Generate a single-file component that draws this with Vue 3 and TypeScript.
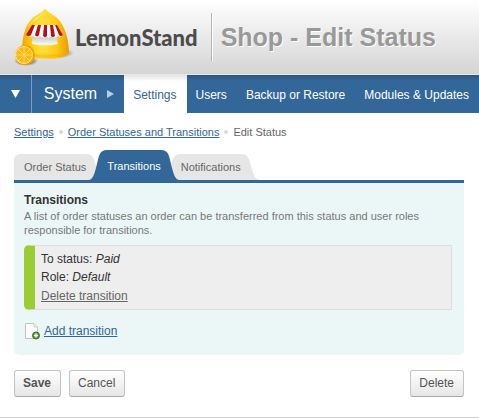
<script setup lang="ts">
import { ref } from 'vue'

interface Transition {
  id: number
  status: string
  role: string
}

const menu = ['Settings', 'Users', 'Backup or Restore', 'Modules & Updates']
const tabs = ['Order Status', 'Transitions', 'Notifications']
const activeMenu = ref('Settings')
const activeTab = ref('Transitions')
const transitions = ref<Transition[]>([{ id: 1, status: 'Paid', role: 'Default' }])

function removeTransition(id: number) {
  transitions.value = transitions.value.filter((t) => t.id !== id)
}

function addTransition() {
  transitions.value.push({ id: Date.now(), status: 'Paid', role: 'Default' })
}
</script>

<template>
  <div class="page">
    <header class="header">
      <a class="brand" href="#">
        <svg class="logo" width="64" height="60" viewBox="0 0 64 60" aria-hidden="true">
          <defs>
            <linearGradient id="dome" x1="0" x2="1" y1="0" y2="0">
              <stop offset="0" stop-color="#f3a800" />
              <stop offset=".25" stop-color="#ffd21c" />
              <stop offset=".45" stop-color="#ffdf3c" />
              <stop offset=".75" stop-color="#ffca12" />
              <stop offset="1" stop-color="#e89a00" />
            </linearGradient>
            <linearGradient id="counter" x1="0" x2="0" y1="0" y2="1">
              <stop offset="0" stop-color="#c2c2c2" />
              <stop offset="1" stop-color="#f4f4f4" />
            </linearGradient>
            <radialGradient id="shade">
              <stop offset=".6" stop-color="#6b5a20" stop-opacity=".6" />
              <stop offset="1" stop-color="#6b5a20" stop-opacity="0" />
            </radialGradient>
          </defs>
          <ellipse cx="39" cy="46" rx="24" ry="6" fill="url(#shade)" />
          <ellipse cx="15" cy="54" rx="12" ry="5" fill="url(#shade)" />
          <path d="M34 2C36 3 38 6 42 8C52 14 57 27 58 44C58 49 48 52 35 52C22 52 11 49 11 44C11 28 15 14 26 8C30 6 32 3 34 2Z" fill="url(#dome)" />
          <path d="M12 44C18 49 50 49 57 44C57 49 47 51 35 51C23 51 13 48 12 44Z" fill="#f3a900" opacity=".45" />
          <path d="M33 4C31 7 28 9 25 11C20 15 18 17 17 20C23 13 29 12 33 4Z" fill="#fff2a0" opacity=".7" />
          <path d="M22 28H46V36Q34 39 21 36Z" fill="url(#counter)" />
          <path d="M21 35Q34 38 47 35V37Q34 40 21 37Z" fill="#fff8dc" />
          <path d="M21 18H46L52 28Q50 31 47 29Q44 32 41 29Q38 32 35 29Q32 32 29 29Q26 32 23 29Q20 31 16 28Z" fill="#fff" />
          <path d="M21 18h3l-4 10q-2 2-5 0zM27 18h3l-2 10q-2 3-4 0zM33 18h3v11q-2 2-4 0zM39 18h3l2 11q-2 2-4 0zM44 18h2l6 10q-2 2-4 0z" fill="#b8101a" />
          <circle cx="14" cy="48" r="10" fill="#f2a100" />
          <circle cx="13" cy="48" r="9" fill="#ffe98a" />
          <circle cx="13" cy="48" r="8" fill="#fdb813" />
          <path d="M13 40V56M5 48H21M7 42L19 54M19 42L7 54" stroke="#ffe98a" stroke-width="1" opacity=".7" />
        </svg>
        <span class="brand-name">LemonStand</span>
      </a>
      <h1 class="title">Shop - Edit Status</h1>
    </header>

    <nav class="nav">
      <button class="nav-toggle" type="button" aria-label="Menu">
        <svg width="9" height="8" viewBox="0 0 9 8"><path d="M0 0H9L4.500 8Z" fill="#fff" /></svg>
      </button>
      <a class="section" href="#">
        System
        <svg width="7" height="8" viewBox="0 0 7 8"><path d="M0 0L7 4L0 8Z" fill="#b9cde0" /></svg>
      </a>
      <a
        v-for="item in menu"
        :key="item"
        href="#"
        class="nav-item"
        :class="{ active: item === activeMenu }"
        @click.prevent="activeMenu = item"
      >{{ item }}</a>
    </nav>

    <main class="content">
      <div class="crumbs">
        <a href="#">Settings</a><i class="dot"></i>
        <a href="#">Order Statuses and Transitions</a><i class="dot"></i>
        <span>Edit Status</span>
      </div>

      <div class="tabs" role="tablist">
        <button
          v-for="tab in tabs"
          :key="tab"
          type="button"
          role="tab"
          class="tab"
          :class="{ active: tab === activeTab }"
          :aria-selected="tab === activeTab"
          @click="activeTab = tab"
        >
          <svg class="cap left" viewBox="0 0 18 30" preserveAspectRatio="none"><path d="M0 30C4 29 5 25 7 18C10 6 10 0 18 0V30Z" /></svg>
          <span class="tab-label">{{ tab }}</span>
          <svg class="cap" viewBox="0 0 18 30" preserveAspectRatio="none"><path d="M18 30C14 29 13 25 11 18C8 6 8 0 0 0V30Z" /></svg>
        </button>
      </div>

      <section class="panel">
        <h2>Transitions</h2>
        <p class="hint">
          A list of order statuses an order can be transferred from this status and user roles
          responsible for transitions.
        </p>
        <div v-for="t in transitions" :key="t.id" class="card">
          <div>To status: <em>{{ t.status }}</em></div>
          <div>Role: <em>{{ t.role }}</em></div>
          <a href="#" @click.prevent="removeTransition(t.id)">Delete transition</a>
        </div>
        <a class="add" href="#" @click.prevent="addTransition">
          <svg width="16" height="17" viewBox="0 0 16 17" aria-hidden="true">
            <path d="M1.500 .5H10L13.500 4V15.500H1.500Z" fill="#fcfcfc" stroke="#c3c3c3" />
            <path d="M10 .5V4H13.500" fill="#eee" stroke="#d0d0d0" />
            <circle cx="12" cy="12.500" r="3.500" fill="#5c9a36" stroke="#397020" />
            <path d="M12 10.500V14.500M10 12.500H14" stroke="#fff" stroke-width="1.300" />
          </svg>
          <span>Add transition</span>
        </a>
      </section>

      <div class="actions">
        <button type="button" class="btn primary">Save</button>
        <button type="button" class="btn">Cancel</button>
        <button type="button" class="btn delete">Delete</button>
      </div>
    </main>
  </div>
</template>

<style>
body {
  background: #fff;
}
</style>

<style scoped>
.page {
  font-family: "Liberation Sans", Arial, sans-serif;
  font-size: 12px;
  color: #333;
  border-bottom: 1px solid #d2d2d2;
}
.header {
  display: flex;
  align-items: center;
  height: 74px;
  border-bottom: 1px solid #e8e8e8;
  background: linear-gradient(#fff, #d4d4d4);
}
.brand {
  display: flex;
  align-items: center;
  padding-left: 11px;
  text-decoration: none;
}
.logo {
  flex: none;
}
.brand-name {
  padding-top: 2px;
  font: 900 22px/24px Lato, "Open Sans", sans-serif;
  color: #4b4b4b;
}
.title {
  display: flex;
  align-items: center;
  height: 48px;
  margin: 0 0 0 13px;
  padding: 0 0 0 9px;
  border-left: 1px solid #b4b4b4;
  box-shadow: inset 1px 0 #fff;
  font-size: 25px;
  line-height: 30px;
  color: #999;
  text-shadow: 1px 1px #fff;
  white-space: nowrap;
}
.nav {
  display: flex;
  height: 38px;
  background: linear-gradient(#2a5682, #336699 6px);
  white-space: nowrap;
  overflow: hidden;
}
.nav-toggle {
  display: flex;
  align-items: center;
  justify-content: center;
  width: 32px;
  padding: 0;
  border: 0;
  border-right: 1px solid #7c9dbf;
  background: none;
}
.section {
  display: flex;
  align-items: center;
  gap: 10px;
  padding: 0 10px 0 12px;
  color: #fff;
  font-size: 16px;
  text-decoration: none;
}
.nav-item {
  display: flex;
  align-items: center;
  padding: 2px 10px 0 9px;
  color: #fff;
  text-decoration: none;
}
.nav-item.active {
  background: linear-gradient(#e2e2e2, #fff 6px);
  color: #336699;
}
.content {
  padding: 11px 15px 20px 14px;
}
.crumbs {
  display: flex;
  align-items: center;
  height: 15px;
  font-size: 11px;
  color: #666;
}
a {
  color: #336699;
}
.dot {
  width: 4px;
  height: 4px;
  margin: 0 5px;
  border-radius: 50%;
  background: #dadada;
}
.tabs {
  display: flex;
  align-items: flex-end;
  height: 30px;
  margin-top: 11px;
  border-bottom: 3px solid #336699;
}
.tab {
  display: flex;
  align-items: center;
  height: 26px;
  margin: 0 0 0 -11px;
  padding: 0;
  border: 0;
  background: none;
  color: #666;
  font: 11px/14px "Liberation Sans", Arial, sans-serif;
}
.tab-label {
  display: flex;
  align-items: center;
  height: 100%;
  background: #e6e6e6;
}
.cap {
  width: 18px;
  height: 100%;
  fill: #e6e6e6;
}
.tab:first-child {
  margin-left: 0;
}
.tab:first-child .left {
  display: none;
}
.tab:first-child .tab-label {
  padding-left: 10px;
  border-top-left-radius: 6px;
}
.tab.active {
  position: relative;
  height: 30px;
  margin-left: -15px;
  margin-right: -5px;
  color: #fff;
}
.tab.active .tab-label {
  padding-top: 2px;
  box-sizing: border-box;
  background: #336699;
}
.tab.active .cap {
  fill: #336699;
}
.panel {
  padding: 9px 12px 15px 10px;
  border-radius: 0 0 5px 5px;
  background: #ebf7f7;
}
h2 {
  margin: 0;
  font-size: 12px;
  line-height: 17px;
}
.hint {
  margin: 0 0 8px;
  font-size: 11px;
  line-height: 14px;
  color: #777;
}
.card {
  margin-bottom: 12px;
  padding: 4px 6px 3px;
  border: 1px solid #dadedd;
  border-left: 11px solid #9acd32;
  border-radius: 5px 0 0 5px;
  background: #eee;
  line-height: 18px;
}
.card a {
  display: inline-block;
  color: #666;
  line-height: 20px;
}
.add {
  display: flex;
  align-items: center;
  gap: 4px;
  width: fit-content;
  height: 18px;
  text-decoration: none;
}
.add span {
  text-decoration: underline;
}
.actions {
  display: flex;
  gap: 8px;
  margin-top: 15px;
}
.btn {
  height: 27px;
  padding: 0 9px 0 8px;
  border: 1px solid #c4c4c4;
  border-bottom-color: #a8a8a8;
  border-radius: 3px;
  background: linear-gradient(#fff, #e6e6e6);
  color: #555;
  font: 12px/15px "Liberation Sans", Arial, sans-serif;
}
.primary {
  font-weight: bold;
}
.delete {
  margin-left: auto;
}
</style>
